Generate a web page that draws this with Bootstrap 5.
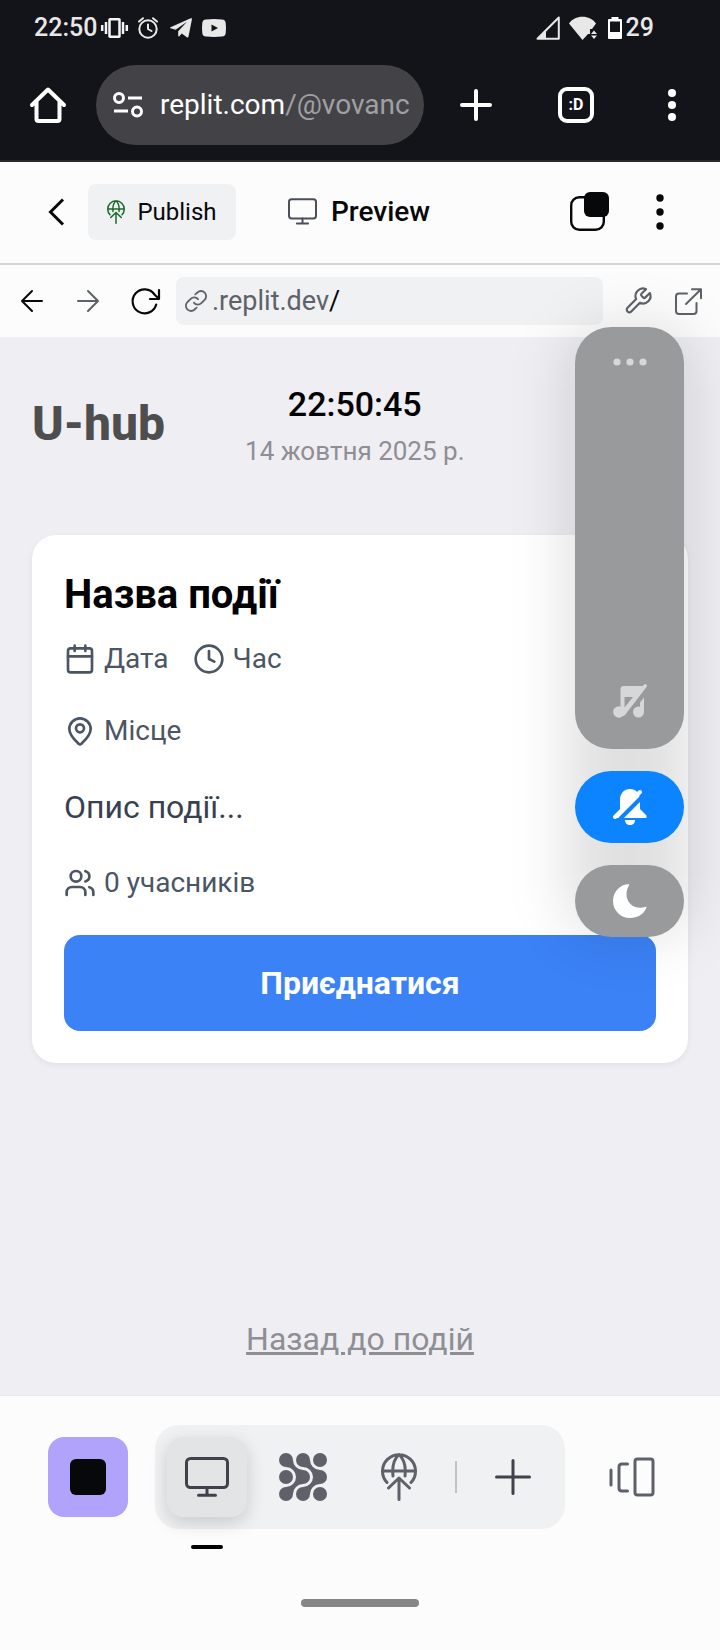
<!DOCTYPE html>
<html lang="uk">
<head>
<meta charset="utf-8">
<meta name="viewport" content="width=device-width, initial-scale=1">
<title>U-hub</title>
<link rel="stylesheet" href="https://cdn.jsdelivr.net/npm/bootstrap@5.3.0/dist/css/bootstrap.min.css">
<style>
  body { font-family: Roboto, "Noto Sans", sans-serif; background: #fcfcfc; color: #07080a; }
  svg { display: block; flex: none; overflow: visible; }
  .ln { fill: none; stroke: currentColor; stroke-linecap: round; stroke-linejoin: round; }
  .btn-bare { padding: 0; border: 0; background: none; color: inherit; display: flex; align-items: center; justify-content: center; flex: none; }
  .chrome { background: #131419; border-bottom: 2px solid #2a282f; color: #fff; }
  .status { height: 54px; padding: 2px 66px 0 34px; font-size: 25px; font-weight: 500; line-height: 52px; color: #e8e8e8; }
  .status-icons { gap: 10px; margin-left: 4px; }
  .browser-bar { height: 106px; padding: 0 44px 4px 30px; }
  .browser-actions { gap: 66px; margin: 0 6px 0 36px; }
  .omnibox { height: 80px; border-radius: 40px; background: #434347; margin-left: 30px; padding: 0 16px 0 17px; font-size: 28px; min-width: 0; gap: 17px; }
  .bare-input { border: 0; background: transparent; padding: 0; min-width: 0; outline: 0; flex: 1 1 0; font: inherit; }
  .omnibox .bare-input { color: #a0a0a3; }
  .tab-count { width: 36px; height: 36px; border: 4px solid #fff; border-radius: 9px; font-size: 16px; font-weight: 700; line-height: 28px; }
  .tool-row { height: 103px; border-bottom: 2px solid #d4d4d5; padding: 0 56px 2px 48px; }
  .publish { width: 148px; height: 56px; border-radius: 8px; background: #eff1f3; font-size: 24px; line-height: 28px; margin-left: 24px; gap: 12px; }
  .tab-name { font-size: 28px; font-weight: 500; gap: 14px; margin-left: 52px; }
  .tool-actions { gap: 47px; }
  .url-row { height: 72px; padding: 0 18px 0 20px; }
  .url-nav { gap: 32px; }
  .url-tools { gap: 22px; color: #5e616a; }
  .url-field { height: 48px; border-radius: 8px; background: #eff1f3; margin: 0 20px 0 16px; padding-left: 9px; font-size: 27px; color: #5e616a; min-width: 0; gap: 5px; }
  .url-field .bare-input { color: #07080a; margin-left: -5px; }
  .app { background: #efeef3; padding: 47px 32px 32px; border-bottom: 1px solid #e8e8ec; }
  .brand { font-size: 48px; font-weight: 800; line-height: 56px; color: #4e4e4e; }
  .head { gap: 80px; margin-bottom: 64px; }
  .clock { font-size: 34px; font-weight: 500; line-height: 40px; color: #000; }
  .day { font-size: 26px; line-height: 40px; color: #8e8e93; margin-top: 7px; }
  .event { border: 0; border-radius: 24px; padding: 32px; box-shadow: 0 2px 6px rgba(0,0,0,.06); }
  .event h2 { font-size: 40px; font-weight: 700; line-height: 56px; color: #000; margin-bottom: 16px; }
  .meta { font-size: 28px; line-height: 40px; color: #4b5563; }
  .about { font-size: 32px; line-height: 48px; color: #374151; margin: 32px 0; }
  .join { height: 96px; border-radius: 16px; background: #3b82f6; color: #fff; font-size: 32px; font-weight: 700; margin-top: 32px; }
  .back { font-size: 32px; line-height: 48px; color: #8e8e93; }
  .floaters { top: -10px; right: 36px; width: 109px; gap: 22px; z-index: 5; }
  .floaters::before { content: ""; position: absolute; inset: 0 -8px; z-index: -1; border-radius: 40px; background: rgba(0,0,0,.12); filter: blur(28px); }
  .pill { border-radius: 36px; background: #999a9b; height: 72px; color: #fff; width: 100%; }
  .pill-tall { height: 422px; color: #d6d7d9; padding: 31px 0; }
  .pill-on { background: #0c84ff; }
  .dock { padding: 29px 48px 42px; }
  .dock-group { background: #eff1f3; border-radius: 24px; padding: 12px; gap: 16px; color: #5e616a; }
  .dock-btn { width: 80px; height: 80px; border-radius: 16px; }
  .dock-run { background: #b1a3fc; color: #07080a; }
  .dock-active { background: #e3e4e6; color: #3f424b; box-shadow: 0 6px 18px rgba(0,0,0,.16); position: relative; }
  .dock-active::after { content: ""; position: absolute; left: 24px; top: 108px; width: 32px; height: 4px; border-radius: 2px; background: #000; }
  .divider { width: 2px; height: 32px; background: #c0c2c4; }
  .home-strip { padding: 28px 0 43px; }
  .handle { width: 118px; height: 8px; border-radius: 4px; background: #868686; }
</style>
</head>
<body class="d-flex flex-column min-vh-100">
<svg width="0" height="0" class="position-absolute" aria-hidden="true">
  <symbol id="monitor" viewBox="0 0 44 40"><g class="ln" stroke-width="3"><rect x="1.500" y="1.500" width="41" height="29" rx="4"/><path d="M22 30.500v7.500M13.500 38.300h17"/></g></symbol>
  <symbol id="globe-up" viewBox="0 0 36 48"><g class="ln" stroke-width="3"><path d="M6 29.500A16.500 16.500 0 1 1 30 29.500M1.500 18h33M12 23C11 14 13 6 18 1.500C23 6 25 14 24 23M18 25v21.500M7.500 35L18 25l10.500 10"/></g></symbol>
</svg>

<header class="chrome">
  <div class="status d-flex justify-content-between">
    <div class="d-flex align-items-center">
      <span>22:50</span>
      <div class="status-icons d-flex align-items-center">
        <svg width="27" height="20" viewBox="0 0 27 20"><g fill="none" stroke="#f4f4f4" stroke-width="2.500"><rect x="8.500" y="1.250" width="10" height="17.500" rx=".5"/><path d="M5 4v12M1.200 7v6M22 4v12M25.800 7v6"/></g></svg>
        <svg width="20" height="22" viewBox="0 0 20 22"><g class="ln" stroke-width="2"><circle cx="10" cy="12" r="8.700"/><path d="M10 7.500V12l3.500 2M1 4.500L5 1.200M19 4.500L15 1.200"/></g></svg>
        <svg width="24" height="20" viewBox="-2 0 24 20"><path fill="currentColor" d="M.5 9.200L20.700.3c.8-.3 1.400.2 1.200 1.100l-3.400 17.200c-.2 1-.9 1.200-1.700.7l-5-3.800-2.500 2.700c-.6.600-1.100.3-1.100-.5V13.300L17 3.800 5.600 11.800.6 10.300c-.6-.2-.7-.8-.1-1.100z"/></svg>
        <svg width="24" height="18" viewBox="0 0 24 18"><path fill="currentColor" fill-rule="evenodd" d="M4 .4Q12-.4 20 .4Q23.500.7 23.700 4Q24.300 9 23.700 14Q23.500 17.300 20 17.600Q12 18.400 4 17.600Q.5 17.300.3 14Q-.3 9 .3 4Q.5.7 4 .4zM9.500 5.500v7l6.500-3.500z"/></svg>
      </div>
    </div>
    <div class="d-flex align-items-center">
      <div class="status-icons d-flex align-items-center me-1">
        <svg width="24" height="24" viewBox="0 0 24 24"><path fill="none" stroke="currentColor" stroke-width="2" stroke-linejoin="round" d="M22.800 1.500v21.300H1.500z"/><path fill="currentColor" d="M1 23L10 13.500V23z"/></svg>
        <svg width="28" height="24" viewBox="1 0 28 24"><path fill="currentColor" d="M13.500 24L0 7.500C3 3 8 .7 13.500.7S24 3 27 7.500L23 13h-2v5h-2z"/><path fill="currentColor" d="M25 14.500l3 3.500h-6zM25 23l3-3.500h-6z"/></svg>
        <svg width="14" height="22" viewBox="0 0 14 22"><path fill="#fff" fill-rule="evenodd" d="M3.500 0h7v2H13q1 0 1 1v18q0 1-1 1H1q-1 0-1-1V3q0-1 1-1h2.500zM2 4.500V15h10V4.500z"/></svg>
      </div>
      <span>29</span>
    </div>
  </div>
  <div class="browser-bar d-flex align-items-center">
    <button class="btn-bare" aria-label="Home"><svg width="36" height="36" viewBox="0 0 36 36"><g class="ln" stroke-width="4"><path d="M6.500 15v17q0 2 2 2h19q2 0 2-2V15M2 18L18 2.500 34 18"/></g></svg></button>
    <label class="omnibox d-flex align-items-center flex-grow-1">
      <svg width="30" height="26" viewBox="0 0 30 26"><g fill="none" stroke="#fff" stroke-width="3"><circle cx="6" cy="6" r="4.500"/><circle cx="24" cy="19.500" r="4.500"/><path d="M15 6h14M1 19h14"/></g></svg>
      <span class="d-flex flex-grow-1">replit.com<input class="bare-input" type="text" value="/@vovanc" aria-label="Address"></span>
    </label>
    <div class="browser-actions d-flex align-items-center">
      <button class="btn-bare" aria-label="New tab"><svg width="32" height="32" viewBox="0 0 32 32"><path class="ln" stroke-width="4" d="M16 2v28M2 16h28"/></svg></button>
      <button class="btn-bare tab-count" aria-label="Tabs">:D</button>
    </div>
    <button class="btn-bare ms-auto ps-1" aria-label="Menu"><svg class="ms-5 ps-3" width="24" height="32" viewBox="0 0 8 32" fill="#fff"><circle cx="4" cy="4" r="4"/><circle cx="4" cy="16" r="4"/><circle cx="4" cy="28" r="4"/></svg></button>
  </div>
</header>

<nav class="tool-row d-flex align-items-center">
  <button class="btn-bare" aria-label="Back"><svg width="16" height="28" viewBox="0 0 16 28"><path fill="none" stroke="currentColor" stroke-width="3" d="M15 1.500L2.500 14 15 26.500"/></svg></button>
  <button class="btn-bare publish"><svg width="18" height="24" color="#1b6b2a"><use href="#globe-up"/></svg>Publish</button>
  <div class="tab-name d-flex align-items-center"><svg width="29" height="27" color="#4b4e57"><use href="#monitor"/></svg>Preview</div>
  <div class="tool-actions d-flex align-items-center ms-auto">
    <button class="btn-bare" aria-label="Split"><svg width="39" height="39" viewBox="0 0 39 39"><rect x="1.200" y="5.200" width="32.600" height="32.600" rx="8" fill="none" stroke="currentColor" stroke-width="2.400"/><rect x="14" width="25" height="25" rx="6" fill="currentColor"/></svg></button>
    <button class="btn-bare" aria-label="More"><svg width="8" height="36" viewBox="0 0 8 36" fill="currentColor"><circle cx="4" cy="4" r="3.700"/><circle cx="4" cy="18" r="3.700"/><circle cx="4" cy="32" r="3.700"/></svg></button>
  </div>
</nav>

<div class="url-row d-flex align-items-center">
  <div class="url-nav d-flex align-items-center">
    <button class="btn-bare" aria-label="Previous page"><svg width="24" height="22" viewBox="0 0 24 22"><path class="ln" stroke-width="2" d="M22 11H2M12 1L2 11l10 10"/></svg></button>
    <button class="btn-bare" aria-label="Next page" style="color:#5e616a"><svg width="24" height="22" viewBox="-1 0 24 22"><path class="ln" stroke-width="2" d="M1 11h20M11 1l10 10-10 10"/></svg></button>
    <button class="btn-bare" aria-label="Reload"><svg width="28" height="26" viewBox="1 0 28 26"><path class="ln" stroke-width="2.200" d="M25.200 16.500A12 12 0 1 1 23.500 6.500L27.500 10.500M28 2v9h-9"/></svg></button>
  </div>
  <label class="url-field d-flex align-items-center flex-grow-1">
    <svg width="22" height="22" viewBox="0 0 22 22"><g class="ln" stroke-width="1.800"><path d="M9 12.800a5 5 0 0 0 7.300.3l3.300-3.300A5.100 5.100 0 0 0 12.400 2.500L10.300 4.400"/><path d="M13 9.200a5 5 0 0 0-7.300-.3L2.400 12.200a5.100 5.100 0 0 0 7.200 7.300l2-1.900"/></g></svg>
    <span>.replit.dev</span><input class="bare-input" type="text" value="/" aria-label="Path">
  </label>
  <div class="url-tools d-flex align-items-center">
    <button class="btn-bare" aria-label="Tools"><svg width="30" height="30" viewBox="0 0 24 24"><path class="ln" stroke-width="1.700" d="M14.700 6.300a1 1 0 0 0 0 1.400l1.600 1.600a1 1 0 0 0 1.400 0l3.770-3.770a6 6 0 0 1-7.940 7.940l-6.910 6.910a2.120 2.120 0 0 1-3-3l6.910-6.910a6 6 0 0 1 7.940-7.940l-3.760 3.760z"/></svg></button>
    <button class="btn-bare" aria-label="Open in new tab"><svg width="27" height="27" viewBox="0 0 27 27"><path class="ln" stroke-width="2" d="M12 5.500H4q-3 0-3 3V23q0 3 3 3h14.500q3 0 3-3v-8M17 1.200h9v9M26 1.200L11 16"/></svg></button>
  </div>
</div>

<main class="app position-relative d-flex flex-column flex-grow-1">
  <div class="floaters position-absolute d-flex flex-column">
    <div class="pill pill-tall d-flex flex-column align-items-center justify-content-between">
      <button class="btn-bare" aria-label="Sound options"><svg width="34" height="8" viewBox="0 0 34 8" fill="currentColor"><circle cx="4" cy="4" r="3.600"/><circle cx="17" cy="4" r="3.600"/><circle cx="30" cy="4" r="3.600"/></svg></button>
      <button class="btn-bare" aria-label="Media volume"><svg width="34" height="34" viewBox="0 0 34 34"><g fill="currentColor"><circle cx="5.800" cy="28" r="5.700"/><circle cx="25.500" cy="28" r="5.500"/><path fill-rule="evenodd" d="M7.500 28V5q0-3 3-3h19L31.200.5q1.500-1 2.500.3.800 1-.2 2.300L12 31q-2 2-4 .5zM11.500 13v10.500L20 13z"/><path d="M27 18.500l4-5V28h-4z"/></g></svg></button>
    </div>
    <button class="btn-bare pill pill-on" aria-label="Mute notifications"><svg width="34" height="36" viewBox="0 0 34 36"><g fill="currentColor"><path d="M7 23V11C7 4.500 11 0 17 0s10 4.500 10 11v9l6.500 6.500V29H2l5-6z"/><path d="M12 31h10c0 3-2 5-5 5s-5-2-5-5z"/></g><path d="M33 4L7 30" stroke="#0c84ff" stroke-width="4"/><path d="M27 3L2 28" stroke="currentColor" stroke-width="4" stroke-linecap="round"/></svg></button>
    <button class="btn-bare pill" aria-label="Do not disturb"><svg width="34" height="34" viewBox="0 0 34 34"><path fill="currentColor" d="M15.500.3C7 .3 0 8 0 17c0 9.500 7.500 17 17 17 7.500 0 14-4 16.500-10.500.2-.6-.2-.9-.8-.7C23 26.500 13.500 20 13.500 10.500c0-3.500.8-6.500 2.600-9.300.3-.6.100-.9-.6-.9z"/></svg></button>
  </div>

  <div class="head d-flex align-items-center">
    <h1 class="brand mb-2">U-hub</h1>
    <div class="text-center">
      <div class="clock">22:50:45</div>
      <div class="day">14 жовтня 2025 р.</div>
    </div>
  </div>

  <section class="card event">
    <h2>Назва події</h2>
    <div class="meta d-flex gap-4 mb-4 pb-2">
      <span class="d-flex align-items-center gap-2"><svg width="32" height="32" viewBox="0 0 24 24"><g class="ln" stroke-width="2"><rect x="3" y="4" width="18" height="18" rx="2"/><path d="M16 2v4M8 2v4M3 10h18"/></g></svg>Дата</span>
      <span class="d-flex align-items-center gap-2"><svg width="32" height="32" viewBox="0 0 24 24"><g class="ln" stroke-width="2"><circle cx="12" cy="12" r="10"/><path d="M12 6v6l4 2"/></g></svg>Час</span>
    </div>
    <div class="meta d-flex align-items-center gap-2"><svg width="32" height="32" viewBox="0 0 24 24"><g class="ln" stroke-width="2"><path d="M20 10.500c0 4.800-4.500 8.700-7 11.100a1.500 1.500 0 0 1-2 0C8.500 19.200 4 15.300 4 10.500a8 8 0 0 1 16 0z"/><circle cx="12" cy="10" r="3"/></g></svg>Місце</div>
    <p class="about">Опис події...</p>
    <div class="meta d-flex align-items-center gap-2"><svg width="32" height="32" viewBox="0 0 24 24"><g class="ln" stroke-width="2"><path d="M16 21v-2a4 4 0 0 0-4-4H6a4 4 0 0 0-4 4v2"/><circle cx="9" cy="7" r="4"/><path d="M22 21v-2a4 4 0 0 0-3-3.870M16 3.130a4 4 0 0 1 0 7.750"/></g></svg>0 учасників</div>
    <button class="btn join w-100">Приєднатися</button>
  </section>

  <a href="#" class="back mt-auto align-self-center">Назад до подій</a>
</main>

<footer>
  <div class="dock d-flex align-items-center justify-content-between">
    <button class="btn-bare dock-btn dock-run" aria-label="Stop"><svg width="36" height="36" viewBox="0 0 36 36"><rect width="36" height="36" rx="6" fill="currentColor"/></svg></button>
    <div class="dock-group d-flex align-items-center">
      <button class="btn-bare dock-btn dock-active" aria-label="Preview"><svg width="44" height="40"><use href="#monitor"/></svg></button>
      <button class="btn-bare dock-btn" aria-label="Agent"><svg width="48" height="48" viewBox="0 0 48 48" fill="currentColor"><circle cx="7" cy="7" r="7"/><circle cx="24" cy="7" r="7"/><circle cx="41" cy="7" r="7"/><circle cx="7" cy="24" r="7"/><circle cx="24" cy="24" r="7"/><circle cx="41" cy="24" r="7"/><circle cx="7" cy="41" r="7"/><circle cx="24" cy="41" r="7"/><circle cx="41" cy="41" r="7"/><path d="M14 7A10 10 0 0 0 24 17L17 24A10 10 0 0 0 7 14zM31 7A10 10 0 0 0 41 17L34 24A10 10 0 0 0 24 14zM14 41A10 10 0 0 1 24 31L17 24A10 10 0 0 1 7 34zM31 41A10 10 0 0 1 41 31L34 24A10 10 0 0 1 24 34z"/></svg></button>
      <button class="btn-bare dock-btn" aria-label="Publish"><svg width="36" height="48"><use href="#globe-up"/></svg></button>
      <span class="divider"></span>
      <button class="btn-bare dock-btn" aria-label="Add" style="color:#3f424b"><svg width="36" height="36" viewBox="0 0 36 36"><path class="ln" stroke-width="3" d="M18 1.500v33M1.500 18h33"/></svg></button>
    </div>
    <button class="btn-bare dock-btn" aria-label="Switch pane" style="color:#5e616a"><svg width="46" height="40" viewBox="0 0 46 40"><g class="ln" stroke-width="3"><path d="M2 13v15M18.500 7H13q-3 0-3 3v21q0 3 3 3h5.500"/><rect x="26" y="2" width="18" height="36" rx="2.500"/></g></svg></button>
  </div>
  <div class="home-strip d-flex justify-content-center"><div class="handle"></div></div>
</footer>
<script src="https://cdn.jsdelivr.net/npm/bootstrap@5.3.0/dist/js/bootstrap.bundle.min.js"></script>
</body>
</html>
